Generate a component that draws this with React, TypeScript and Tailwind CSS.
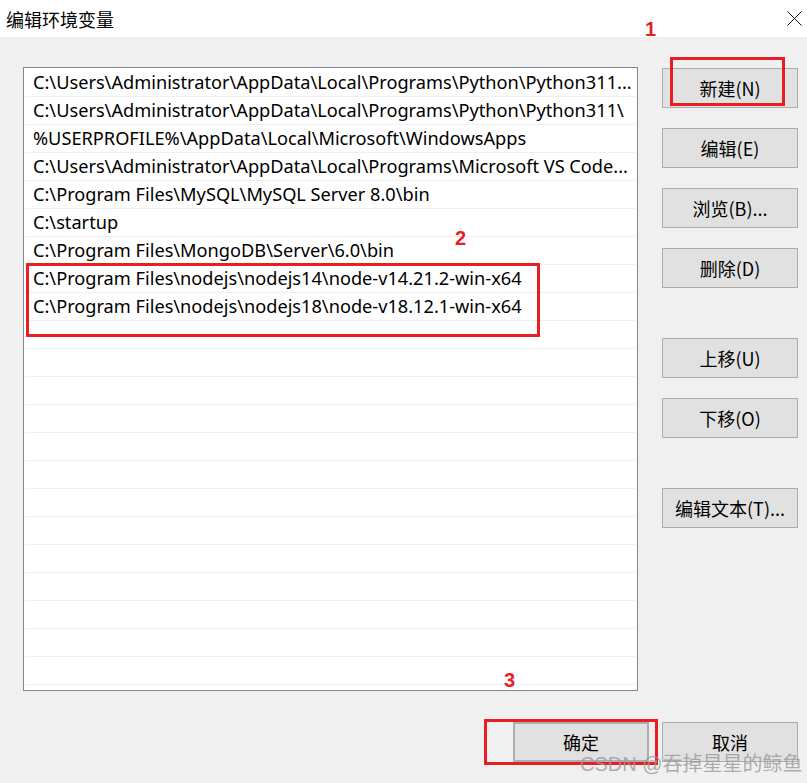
const rows = [
  "C:\\Users\\Administrator\\AppData\\Local\\Programs\\Python\\Python311...",
  "C:\\Users\\Administrator\\AppData\\Local\\Programs\\Python\\Python311\\",
  "%USERPROFILE%\\AppData\\Local\\Microsoft\\WindowsApps",
  "C:\\Users\\Administrator\\AppData\\Local\\Programs\\Microsoft VS Code...",
  "C:\\Program Files\\MySQL\\MySQL Server 8.0\\bin",
  "C:\\startup",
  "C:\\Program Files\\MongoDB\\Server\\6.0\\bin",
  "C:\\Program Files\\nodejs\\nodejs14\\node-v14.21.2-win-x64",
  "C:\\Program Files\\nodejs\\nodejs18\\node-v18.12.1-win-x64",
];

const allRows = [...rows, ...Array(22 - rows.length).fill("")];

function Btn({ label, className = "" }: { label: string; className?: string }) {
  return (
    <button
      className={
        "w-[136px] h-[40px] bg-[#e1e1e1] border border-[#adadad] text-[18px] text-black flex items-center justify-center " +
        className
      }
    >
      {label}
    </button>
  );
}

export default function App() {
  return (
    <div className="relative w-[807px] h-[783px] overflow-hidden bg-[#f0f0f0] font-['Noto_Sans','Noto_Sans_CJK_SC',sans-serif] text-black">
      {/* Title bar */}
      <div className="h-[37px] bg-white flex items-center justify-between pl-[6px] pr-[5px]">
        <span className="text-[18px] leading-none font-['Noto_Sans_CJK_SC',sans-serif]">编辑环境变量</span>
        <svg width="15" height="15" viewBox="0 0 15 15" className="mt-[-1px]">
          <path d="M0.5 0.5 L14.5 14.5 M14.5 0.5 L0.5 14.5" stroke="#111" strokeWidth="1" />
        </svg>
      </div>

      {/* Body */}
      <div className="flex pl-[23px] pt-[30px]">
        <div className="w-[615px] h-[624px] border border-[#828790] bg-white p-px">
          {allRows.map((r, i) => (
            <div
              key={i}
              className="h-[28px] border-b border-[#f0f0f0] pl-[8px] flex items-center whitespace-nowrap overflow-hidden text-[18.2px] leading-none"
            >
              {r}
            </div>
          ))}
        </div>

        <div className="ml-[24px] mt-px flex flex-col font-['Noto_Sans_CJK_SC',sans-serif]">
          <Btn label="新建(N)" />
          <Btn label="编辑(E)" className="mt-[20px]" />
          <Btn label="浏览(B)..." className="mt-[20px]" />
          <Btn label="删除(D)" className="mt-[20px]" />
          <Btn label="上移(U)" className="mt-[50px]" />
          <Btn label="下移(O)" className="mt-[20px]" />
          <Btn label="编辑文本(T)..." className="mt-[50px]" />
        </div>
      </div>

      {/* Footer */}
      <div className="flex justify-end gap-[13px] pr-[9px] mt-[31px] font-['Noto_Sans_CJK_SC',sans-serif]">
        <Btn label="确定" className="border-2 border-[#0078d7]" />
        <Btn label="取消" />
      </div>

      {/* Annotations */}
      <div className="absolute left-[670px] top-[57px] w-[115px] h-[49px] border-[3px] border-[#e81e25]" />
      <div className="absolute left-[26px] top-[263px] w-[514px] h-[74px] border-[3px] border-[#e81e25]" />
      <div className="absolute left-[484px] top-[719px] w-[174px] h-[46px] border-[3px] border-[#e81e25]" />
      <span className="absolute left-[645px] top-[18px] text-[#e81e25] font-bold text-[20px] leading-[22px] font-['Liberation_Sans',sans-serif]">1</span>
      <span className="absolute left-[455px] top-[227px] text-[#e81e25] font-bold text-[20px] leading-[22px] font-['Liberation_Sans',sans-serif]">2</span>
      <span className="absolute left-[504px] top-[669px] text-[#e81e25] font-bold text-[20px] leading-[22px] font-['Liberation_Sans',sans-serif]">3</span>

      {/* Watermark */}
      <span className="absolute left-[580px] top-[752px] text-[20px] leading-[24px] text-[#9a9a9a]/80 font-['Liberation_Sans','Noto_Sans_CJK_SC',sans-serif]">
        CSDN @吞掉星星的鲸鱼
      </span>
    </div>
  );
}
